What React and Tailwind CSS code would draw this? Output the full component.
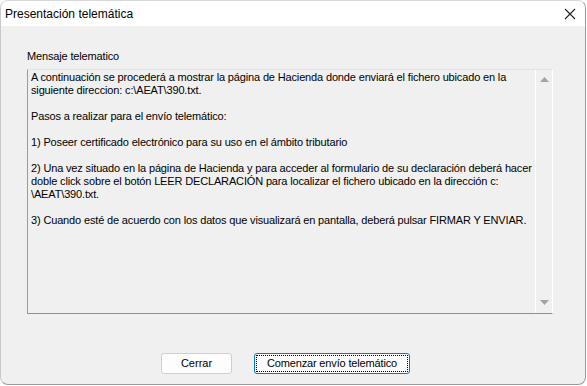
export default function App() {
  const lines = [
    'A continuación se procederá a mostrar la página de Hacienda donde enviará el fichero ubicado en la',
    'siguiente direccion: c:\\AEAT\\390.txt.',
    '',
    'Pasos a realizar para el envío telemático:',
    '',
    '1) Poseer certificado electrónico para su uso en el ámbito tributario',
    '',
    '2) Una vez situado en la página de Hacienda y para acceder al formulario de su declaración deberá hacer',
    'doble click sobre el botón LEER DECLARACIÓN para localizar el fichero ubicado en la dirección c:',
    '\\AEAT\\390.txt.',
    '',
    '3) Cuando esté de acuerdo con los datos que visualizará en pantalla, deberá pulsar FIRMAR Y ENVIAR.'
  ]

  return (
    <div className="w-[587px] h-[386px] bg-white">
      <div className="w-[586px] h-[385px] bg-[#f0f0f0] border border-[#9a9a9a] border-t-[#d8d8d8] border-l-[#c8c8c8] rounded-[8px] overflow-hidden flex flex-col font-['Liberation_Sans',sans-serif] text-black">
        {/* Title bar */}
        <div className="h-[25px] bg-white flex items-center justify-between pl-[4px] pr-[8px] shrink-0">
          <span className="text-[12px] leading-none">Presentación telemática</span>
          <svg width="12" height="12" viewBox="0 0 12 12" className="mr-[1px]">
            <path d="M1 1 L11 11 M11 1 L1 11" stroke="#222" strokeWidth="1.1" fill="none" />
          </svg>
        </div>

        {/* Body */}
        <div className="flex-1 flex flex-col pl-[26px]">
          <div className="mt-[24px] text-[11px] leading-[13px] h-[13px] tracking-[-0.15px]">Mensaje telematico</div>

          <div className="mt-[6px] w-[526px] h-[245px] flex border border-[#e3e3e3] border-b-[#8f8f8f] border-l-[#9a9a9a] border-r-white">
            <div className="flex-1 pl-[3px] pt-[1px] text-[11px] leading-[13px] tracking-[-0.15px] whitespace-pre">
              {lines.map((l, i) => (
                <div key={i} className="h-[13px]">{l}</div>
              ))}
            </div>
            <div className="w-[17px] border-l border-white flex flex-col items-center justify-between pt-[7px] pb-[6px]">
              <svg width="9" height="5" viewBox="0 0 9 5">
                <path d="M4.5 0 L9 5 L0 5 Z" fill="#a3a3a3" />
              </svg>
              <svg width="9" height="5" viewBox="0 0 9 5" className="mb-[2px]">
                <path d="M0 0 L9 0 L4.5 5 Z" fill="#a3a3a3" />
              </svg>
            </div>
          </div>

          {/* Buttons */}
          <div className="mt-[39px] flex gap-[22px] pl-[134px]">
            <button className="w-[71px] h-[21px] bg-[#fdfdfd] border border-[#d0d0d0] rounded-[3px] text-[11px] leading-none">
              Cerrar
            </button>
            <button className="w-[156px] h-[21px] bg-[#fdfdfd] border border-[#0078d7] rounded-[3px] p-[1px]">
              <div className="w-full h-full border border-dotted border-black flex items-center justify-center text-[11px] leading-none tracking-[-0.15px]">
                Comenzar envío telemático
              </div>
            </button>
          </div>
        </div>
      </div>
    </div>
  )
}
